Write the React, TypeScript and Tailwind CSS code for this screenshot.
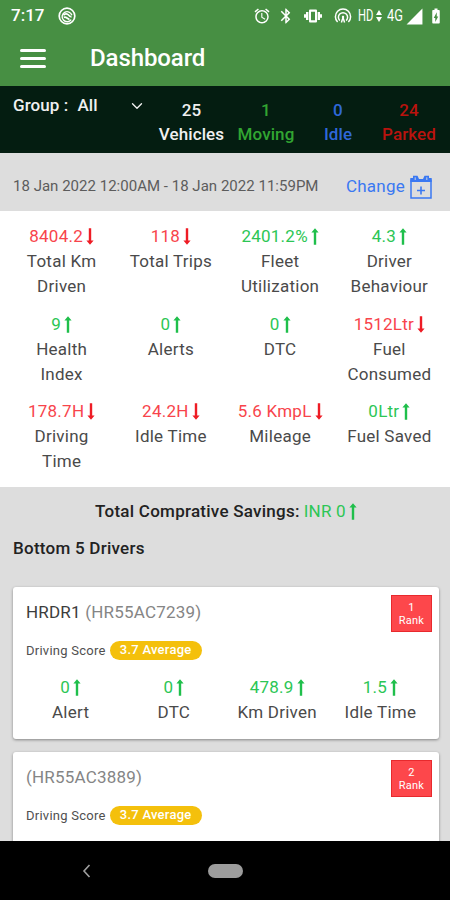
import { ChevronDown } from 'lucide-react';
import { MdAccessAlarm, MdBluetooth, MdSignalCellular4Bar, MdBatteryChargingFull } from 'react-icons/md';

type Trend = 'up' | 'down';

interface Metric {
  value: string;
  label: string;
  trend: Trend;
}

interface Driver {
  rank: number;
  name?: string;
  vehicle: string;
  score: string;
  metrics?: Metric[];
}

const FLEET_STATS = [
  { count: 25, label: 'Vehicles', className: 'w-[73px] text-[#f0f0f0]' },
  { count: 1, label: 'Moving', className: 'w-[76px] text-[#32a532]' },
  { count: 0, label: 'Idle', className: 'w-[68px] text-[#2f68d8]' },
  { count: 24, label: 'Parked', className: 'w-[74px] text-[#b9130e]' },
];

const METRICS: Metric[] = [
  { value: '8404.2', label: 'Total Km Driven', trend: 'down' },
  { value: '118', label: 'Total Trips', trend: 'down' },
  { value: '2401.2%', label: 'Fleet Utilization', trend: 'up' },
  { value: '4.3', label: 'Driver Behaviour', trend: 'up' },
  { value: '9', label: 'Health Index', trend: 'up' },
  { value: '0', label: 'Alerts', trend: 'up' },
  { value: '0', label: 'DTC', trend: 'up' },
  { value: '1512Ltr', label: 'Fuel Consumed', trend: 'down' },
  { value: '178.7H', label: 'Driving Time', trend: 'down' },
  { value: '24.2H', label: 'Idle Time', trend: 'down' },
  { value: '5.6 KmpL', label: 'Mileage', trend: 'down' },
  { value: '0Ltr', label: 'Fuel Saved', trend: 'up' },
];

const DRIVERS: Driver[] = [
  {
    rank: 1,
    name: 'HRDR1',
    vehicle: 'HR55AC7239',
    score: '3.7 Average',
    metrics: [
      { value: '0', label: 'Alert', trend: 'up' },
      { value: '0', label: 'DTC', trend: 'up' },
      { value: '478.9', label: 'Km Driven', trend: 'up' },
      { value: '1.5', label: 'Idle Time', trend: 'up' },
    ],
  },
  { rank: 2, vehicle: 'HR55AC3889', score: '3.7 Average' },
];

function TrendArrow({ trend }: { trend: Trend }) {
  return (
    <svg
      viewBox="0 0 8 17"
      className={`ml-[3px] inline-block h-[17px] w-2 shrink-0 fill-current ${trend === 'down' ? 'rotate-180 text-[#ee1c25]' : 'text-[#1fbf4b]'}`}
    >
      <path d="M4 0.2 L7.6 4.4 H5.2 V16.8 H2.8 V4.4 H0.4 Z" />
    </svg>
  );
}

function MetricCell({ metric }: { metric: Metric }) {
  return (
    <div className="flex flex-col items-center text-center leading-[25px]">
      <div className={`flex items-center whitespace-nowrap ${metric.trend === 'down' ? 'text-[#f8444b]' : 'text-[#2cc655]'}`}>
        {metric.value}
        <TrendArrow trend={metric.trend} />
      </div>
      <div className="px-2 text-[#4a4a4a]">{metric.label}</div>
    </div>
  );
}

function VibrateIcon() {
  return (
    <svg viewBox="0 0 18 16" className="ml-[9px] h-4 w-[18px] fill-current">
      <path fillRule="evenodd" d="M6 1.5 H12 A1 1 0 0 1 13 2.5 V13.5 A1 1 0 0 1 12 14.5 H6 A1 1 0 0 1 5 13.5 V2.5 A1 1 0 0 1 6 1.5 Z M7 3.7 V12.3 H11 V3.7 Z" />
      <path d="M2 4 H4.4 V12 H2 Z M0 6.2 H2 V9.8 H0 Z M13.6 4 H16 V12 H13.6 Z M16 6.2 H18 V9.8 H16 Z" />
    </svg>
  );
}

function HotspotIcon() {
  return (
    <svg viewBox="0 0 18 16" className="ml-[12px] h-4 w-[18px]" fill="none" stroke="currentColor" strokeWidth="1.5">
      <path d="M3.6 14 A7.6 7.6 0 1 1 14.4 14" />
      <path d="M5.8 12.6 A4.6 4.6 0 1 1 12.2 12.6" />
      <path d="M7.4 14.5 L9 9.6 L10.6 14.5" />
      <circle cx="9" cy="9" r="1.2" fill="currentColor" stroke="none" />
    </svg>
  );
}

function StatusBar() {
  return (
    <div className="flex h-8 items-center pl-[11px] pr-[5px] text-white">
      <span className="w-[47px] text-[17px] font-medium">7:17</span>
      <svg viewBox="0 0 18 18" className="h-[18px] w-[18px]" fill="none" stroke="currentColor">
        <circle cx="9" cy="9" r="7.8" strokeWidth="1.7" />
        <path d="M13.2 12.6 A5 5 0 1 1 13.9 8.2" strokeWidth="1.4" />
        <path d="M5.5 8.2 C7 6 9.5 6.8 10.5 8 S12.5 10 13.5 9.5 M5.8 10.5 C8 9 9 12 11.5 12.3" strokeWidth="1.7" />
      </svg>
      <div className="ml-auto flex items-center">
        <MdAccessAlarm className="h-[18px] w-[18px]" />
        <MdBluetooth className="ml-[6px] h-[18px] w-[18px]" />
        <VibrateIcon />
        <HotspotIcon />
        <span className="ml-[6px] w-[17px] origin-left scale-x-70 text-[16px]">HD</span>
        <svg viewBox="0 0 6 12" className="ml-[1px] h-3 w-[6px] fill-current">
          <path d="M3 0 L6 5 H0 Z M3 12 L6 7 H0 Z" />
        </svg>
        <span className="ml-[5px] w-[18px] origin-left scale-x-80 text-[16px]">4G</span>
        <MdSignalCellular4Bar className="h-[19px] w-[19px]" />
        <MdBatteryChargingFull className="ml-[3px] h-[18px] w-[18px]" />
      </div>
    </div>
  );
}

function CalendarPlus() {
  return (
    <svg viewBox="0 0 22 24" className="ml-[5px] h-6 w-[22px]" fill="none" stroke="currentColor">
      <path d="M1 4.5 V23 H21 V4.5" strokeWidth="1.5" />
      <path d="M0.3 3 H3 V0.8 H7.5 L9 4 H13 L14.5 0.8 H19 V3 H21.7 V7 H0.3 Z" fill="currentColor" stroke="none" />
      <path d="M5.2 2.3 V5 M16.8 2.3 V5" stroke="#dddddd" strokeWidth="0.9" />
      <path d="M11 11.5 V19.5 M7 15.5 H15" strokeWidth="1.6" />
    </svg>
  );
}

function DriverCard({ driver }: { driver: Driver }) {
  return (
    <div className="h-[152px] shrink-0 rounded-[3px] bg-white pt-2 shadow-[0_1px_3px_rgba(0,0,0,0.4)]">
      <div className="flex justify-between pl-[13px] pr-[7px]">
        <div>
          <div className="mt-[5px] text-[17px] leading-[25px] tracking-[0.2px] text-[#858585]">
            {driver.name && <span className="text-[#3c3c3c]">{driver.name} </span>}({driver.vehicle})
          </div>
          <div className="mt-[16px] flex items-center text-[13px] leading-[19px] text-[#505050]">
            Driving Score
            <span className="ml-[4px] h-[19px] w-[92px] rounded-full bg-[#f4c00c] text-center leading-[18px] font-medium text-white">
              {driver.score}
            </span>
          </div>
        </div>
        <div className="flex h-[37px] w-[41px] flex-col items-center justify-center border border-[#e8292d] bg-[#fd474b] text-[11px] leading-[13px] text-white">
          <span>{driver.rank}</span>
          <span>Rank</span>
        </div>
      </div>
      {driver.metrics && (
        <div className="mt-[15px] grid grid-cols-4 pl-[6px] pr-[7px]">
          {driver.metrics.map((metric) => (
            <MetricCell key={metric.label} metric={metric} />
          ))}
        </div>
      )}
    </div>
  );
}

export default function App() {
  return (
    <div className="flex h-[900px] w-[450px] flex-col overflow-hidden bg-[#dddddd] font-['Roboto',sans-serif] text-[17px] tracking-[0.25px]">
      <header className="h-[86px] shrink-0 bg-[#478f43] tracking-normal">
        <StatusBar />
        <div className="flex h-[52px] items-center pl-5 text-white">
          <div className="flex w-[26px] flex-col gap-[5px]">
            <div className="h-[3px] rounded-full bg-white" />
            <div className="h-[3px] rounded-full bg-white" />
            <div className="h-[3px] rounded-full bg-white" />
          </div>
          <h1 className="ml-[44px] text-[24px] font-medium tracking-[-0.1px]">Dashboard</h1>
        </div>
      </header>

      <section className="flex h-[67px] shrink-0 bg-[#041d11] pl-[13px] font-medium leading-[25px] tracking-[0.1px]">
        <div className="flex h-[25px] w-[142px] pt-[7px] text-[#f0f0f0]">
          <span>Group :</span>
          <span className="ml-[9px]">All</span>
          <ChevronDown className="ml-auto mr-[9px] mt-[4px] h-[18px] w-[18px] shrink-0" strokeWidth={1.8} />
        </div>
        <div className="flex pt-[12px]">
          {FLEET_STATS.map((stat) => (
            <div key={stat.label} className={`flex flex-col items-center leading-[24px] ${stat.className}`}>
              <span>{stat.count}</span>
              <span>{stat.label}</span>
            </div>
          ))}
        </div>
      </section>

      <section className="flex h-[58px] shrink-0 items-center justify-between pl-[13px] pr-[18px] pt-[9px]">
        <span className="text-[15px] tracking-[0.02px] text-[#5c5c5c]">18 Jan 2022 12:00AM - 18 Jan 2022 11:59PM</span>
        <button className="flex items-center text-[#3a78f2]">
          Change
          <CalendarPlus />
        </button>
      </section>

      <section className="grid h-[276px] shrink-0 auto-rows-[87.5px] grid-cols-4 bg-white pl-[7px] pr-[6px] pt-[13px]">
        {METRICS.map((metric) => (
          <MetricCell key={metric.label} metric={metric} />
        ))}
      </section>

      <section className="flex min-h-0 flex-1 flex-col overflow-hidden pl-[13px] pr-[11px]">
        <div className="mt-[12px] flex items-center justify-center leading-[25px]">
          <span className="font-medium text-[#222]">Total Comprative Savings:</span>
          <span className="ml-1 text-[#2cc655]">INR 0</span>
          <TrendArrow trend="up" />
        </div>
        <h2 className="mt-[12px] font-medium leading-[25px] text-[#222]">Bottom 5 Drivers</h2>
        <div className="mt-[26px] flex flex-col gap-[13px]">
          {DRIVERS.map((driver) => (
            <DriverCard key={driver.rank} driver={driver} />
          ))}
        </div>
      </section>

      <nav className="flex h-[59px] shrink-0 items-center bg-black pl-[82px]">
        <svg viewBox="0 0 8 14" className="h-[14px] w-[9px]" fill="none" stroke="#a0a0a0" strokeWidth="1.6">
          <path d="M7 1 L1.5 7 L7 13" />
        </svg>
        <div className="ml-[117px] h-[14px] w-[35px] rounded-full bg-[#9c9c9c]" />
      </nav>
    </div>
  );
}
